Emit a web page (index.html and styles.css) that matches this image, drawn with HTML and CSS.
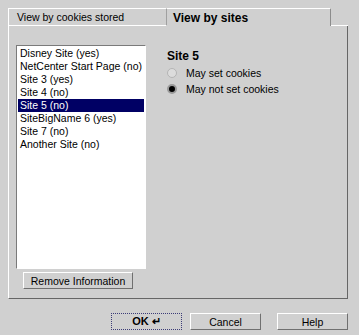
FILE: index.html
```html
<!DOCTYPE html>
<html lang="en">
<head>
    <meta charset="UTF-8">
    <title>Cookie Manager</title>
    <link rel="stylesheet" href="styles.css">
</head>
<body>

<div class="dialog">
    <div class="tabs">
        <div class="tab">View by cookies stored</div>
        <div class="tab active">View by sites</div>
        <div class="tab-fill"></div>
    </div>

    <div class="panel">
        <div class="left-col">
            <ul class="listbox">
                <li>Disney Site (yes)</li>
                <li>NetCenter Start Page (no)</li>
                <li>Site 3 (yes)</li>
                <li>Site 4 (no)</li>
                <li class="selected">Site 5 (no)</li>
                <li>SiteBigName 6 (yes)</li>
                <li>Site 7 (no)</li>
                <li>Another Site (no)</li>
            </ul>
            <button class="btn remove-btn">Remove Information</button>
        </div>

        <div class="details">
            <h2>Site 5</h2>
            <div class="radio-row"><span class="radio"></span>May set cookies</div>
            <div class="radio-row"><span class="radio checked"></span>May not set cookies</div>
        </div>
    </div>

    <div class="buttons">
        <button class="btn ok-btn">OK &#8629;</button>
        <button class="btn">Cancel</button>
        <button class="btn help-btn">Help</button>
    </div>
</div>

</body>
</html>
```

FILE: styles.css
```css
body {
    margin: 0;
    background-color: #d0d0d0;
    color: #000;
    font-family: "Liberation Sans", Arial, sans-serif;
    font-size: 10.5px;
}
.dialog {
    padding: 8px 11px 0 8px;
}
.tabs {
    display: flex;
    height: 18px;
}
.tab {
    box-sizing: border-box;
    width: 159px;
    padding: 2px 0 0 8px;
    border-top: 1px solid #fff;
    border-left: 1px solid #fff;
    border-right: 1px solid #a0a0a0;
    border-bottom: 1px solid #fff;
    line-height: 13px;
}
.tab.active {
    width: 164px;
    padding: 3px 0 0 6px;
    border-left: none;
    border-right: 1px solid #8c8c8c;
    border-bottom: none;
    font-weight: bold;
    font-size: 12px;
}
.tab-fill {
    flex: 1;
    border-bottom: 1px solid #fff;
}
.panel {
    display: flex;
    padding: 19px 0 9px 7px;
    border-left: 1px solid #fff;
    border-right: 1px solid #666;
    border-bottom: 1px solid #666;
}
.left-col {
    display: flex;
    flex-direction: column;
    align-items: flex-start;
}
.listbox {
    box-sizing: border-box;
    width: 130px;
    height: 224px;
    margin: 0;
    padding: 1px 1px 0 1px;
    list-style: none;
    background-color: #fff;
    border: 1px solid;
    border-color: #7a7a7a #fff #fff #7a7a7a;
}
.listbox li {
    height: 13px;
    line-height: 13px;
    padding-left: 2px;
    white-space: nowrap;
}
.listbox li.selected {
    background-color: #000064;
    color: #fff;
}
.btn {
    box-sizing: border-box;
    height: 17px;
    padding: 0;
    background-color: #d0d0d0;
    border: 1px solid;
    border-color: #fff #707070 #707070 #fff;
    font-family: "Liberation Sans", Arial, sans-serif;
    font-size: 10.5px;
    color: #000;
}
.remove-btn {
    width: 110px;
    margin: 3px 0 0 7px;
}
.details {
    padding: 4px 0 0 21px;
}
.details h2 {
    margin: 0;
    font-size: 12px;
    line-height: 14px;
}
.radio-row {
    display: flex;
    align-items: center;
    height: 16px;
    margin-top: 2px;
}
.radio-row + .radio-row {
    margin-top: 0;
}
.radio {
    box-sizing: border-box;
    width: 10px;
    height: 10px;
    margin-right: 9px;
    border-radius: 50%;
    border: 1px solid #b4b4b4;
    background-color: #dcdcdc;
}
.radio.checked {
    border: 2px solid #9a9a9a;
    background-color: #000;
}
.buttons {
    display: flex;
    justify-content: flex-end;
    gap: 8px;
    margin-top: 14px;
}
.buttons .btn {
    width: 71px;
}
.ok-btn {
    font-weight: bold;
    font-size: 11px;
    border: 1px dotted #3c3c78;
}
.help-btn {
    margin-left: 8px;
}
```
